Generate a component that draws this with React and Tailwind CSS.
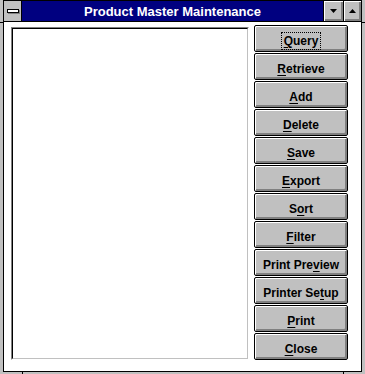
import React from "react";

const BUTTONS = [
  ["Query", 0],
  ["Retrieve", 0],
  ["Add", 0],
  ["Delete", 0],
  ["Save", 0],
  ["Export", 0],
  ["Sort", 1],
  ["Filter", 0],
  ["Print Preview", 9],
  ["Printer Setup", 10],
  ["Print", 0],
  ["Close", 0],
];

function Label({ text, idx }) {
  return (
    <>
      {text.slice(0, idx)}
      <span className="underline underline-offset-[2px] decoration-1">{text[idx]}</span>
      {text.slice(idx + 1)}
    </>
  );
}

function Arrow({ up }) {
  return (
    <svg width="7" height="4" viewBox="0 0 7 4">
      {up ? <polygon points="3.5,0 7,4 0,4" fill="#000" /> : <polygon points="0,0 7,0 3.5,4" fill="#000" />}
    </svg>
  );
}

export default function App() {
  return (
    <div className="relative w-[365px] h-[374px] bg-[#c0c0c0] pl-[3px] pr-[3px] pb-[2px] font-['Liberation_Sans',Arial,sans-serif] overflow-hidden">
      {/* frame notches */}
      <div className="absolute left-0 top-[22px] w-[3px] h-px bg-black" />
      <div className="absolute right-0 top-[22px] w-[3px] h-px bg-black" />
      <div className="absolute bottom-0 left-[22px] w-px h-[2px] bg-black" />
      <div className="absolute bottom-0 left-[343px] w-px h-[2px] bg-black" />

      <div className="flex flex-col w-full h-full border border-black">
        {/* title bar */}
        <div className="flex h-[21px] border-b border-black">
          <div className="w-[18px] h-full bg-[#c0c0c0] border-r border-black flex items-center justify-center">
            <div className="w-[12px] h-[4px] bg-white border border-black shadow-[1px_1px_0_#808080]" />
          </div>
          <div className="flex-1 bg-[#000080] flex items-center justify-center text-white text-[13px] font-bold leading-none pt-[1px]">
            Product Master Maintenance
          </div>
          <div className="w-[20px] h-full border-l border-black bg-[#c0c0c0] shadow-[inset_1px_1px_0_#fff,inset_-2px_-2px_0_#808080] flex items-center justify-center pb-[1px]">
            <Arrow />
          </div>
          <div className="w-[18px] h-full border-l border-black bg-[#c0c0c0] shadow-[inset_1px_1px_0_#fff,inset_-2px_-2px_0_#808080] flex items-center justify-center pb-[1px]">
            <Arrow up />
          </div>
        </div>

        {/* client area */}
        <div className="flex-1 bg-white flex pl-[7px]">
          <div className="mt-[5px] w-[238px] h-[333px] border border-t-[#808080] border-l-[#808080] border-r-white border-b-white">
            <div className="w-full h-full border border-t-black border-l-black border-r-[#c0c0c0] border-b-[#c0c0c0] bg-white" />
          </div>
          <div className="ml-[5px] mt-[3px] flex flex-col gap-px w-[94px]">
            {BUTTONS.map(([text, idx], i) => (
              <div
                key={text}
                className="h-[27px] w-[94px] rounded-[2px] border border-black bg-[#c0c0c0] shadow-[inset_1px_1px_0_#fff,inset_-2px_-2px_0_#808080] flex items-center justify-center text-[12px] font-bold text-black leading-none pt-[4px]"
              >
                {i === 0 ? (
                  <span className="border border-dotted border-black px-[2px] py-[2px]">
                    <Label text={text} idx={idx} />
                  </span>
                ) : (
                  <Label text={text} idx={idx} />
                )}
              </div>
            ))}
          </div>
        </div>
      </div>
    </div>
  );
}
